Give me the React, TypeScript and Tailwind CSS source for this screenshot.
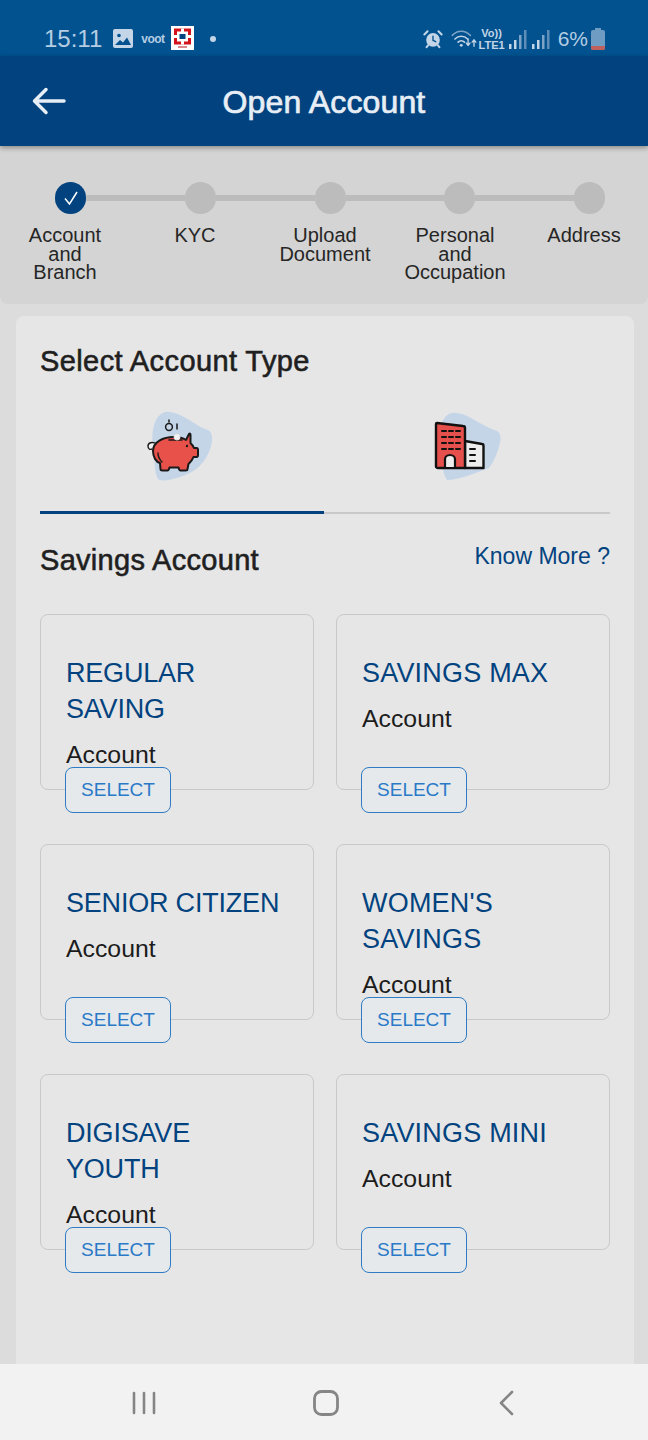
const font = "font-['Liberation_Sans',Arial,sans-serif]";

const steps = [
  { label: ["Account", "and", "Branch"], done: true },
  { label: ["KYC"] },
  { label: ["Upload", "Document"] },
  { label: ["Personal", "and", "Occupation"] },
  { label: ["Address"] },
];

const accounts = [
  { name: ["REGULAR", "SAVING"] },
  { name: ["SAVINGS MAX"], wide: true },
  { name: ["SENIOR CITIZEN"] },
  { name: ["WOMEN'S", "SAVINGS"], wide: true },
  { name: ["DIGISAVE", "YOUTH"] },
  { name: ["SAVINGS MINI"], wide: true },
];

const AlarmIcon = () => (
  <svg width="20" height="20" viewBox="0 0 22 22" fill="none">
    <circle cx="11" cy="12" r="7.5" fill="#c3d5e6" />
    <path d="M11 8v4.500l3 1.500" stroke="#01528f" strokeWidth="1.5" strokeLinecap="round" />
    <path d="M1.500 6 5 2.500M20.500 6 17 2.500M5.500 18 4 20M16.500 18l1.500 2" stroke="#c3d5e6" strokeWidth="2.2" strokeLinecap="round" />
  </svg>
);

const WifiIcon = () => (
  <svg width="26" height="20" viewBox="0 0 28 22" fill="none" strokeLinecap="round">
    <path d="M1 7c6-6 14-6 20 0" stroke="#7da3c6" strokeWidth="1.6" />
    <path d="M4 11c4-4 10-4 14 0" stroke="#c3d5e6" strokeWidth="1.8" />
    <path d="M7.500 14.500c2-2 5-2 7 0" stroke="#c3d5e6" strokeWidth="1.8" />
    <circle cx="11" cy="18" r="1.6" fill="#c3d5e6" />
    <path d="M18.500 11v7m-2-2.500 2 2.500 2-2.500" stroke="#c3d5e6" strokeWidth="1.5" />
    <path d="M25 19v-7m-2 2.500 2-2.500 2 2.500" stroke="#c3d5e6" strokeWidth="1.5" />
  </svg>
);

const SignalIcon = () => (
  <svg width="18" height="20" viewBox="0 0 18 20">
    <rect x="0" y="15" width="2.5" height="5" fill="#c3d5e6" />
    <rect x="5" y="11" width="2.5" height="9" fill="#c3d5e6" />
    <rect x="10" y="6" width="2.5" height="14" fill="#7da3c6" />
    <rect x="15" y="1" width="2.5" height="19" fill="#5f8db8" />
  </svg>
);

const BankLogo = () => (
  <svg width="23" height="24" viewBox="0 0 23 24">
    <rect width="23" height="24" fill="#ffffff" />
    <rect x="3" y="2.500" width="17" height="16" fill="#d3121c" />
    <path d="M10 2.500h3v16h-3ZM3 9h17v3H3Z" fill="#ffffff" />
    <rect x="6" y="5.500" width="11" height="10" fill="#ffffff" />
    <rect x="8.500" y="8" width="6" height="5" fill="#01437f" />
    <rect x="7" y="20" width="9" height="2" fill="#d98a8e" />
  </svg>
);

const PiggyIcon = () => (
  <svg className="-ml-[2px]" width="70" height="76" viewBox="0 0 70 76" fill="none">
    <path d="M19 5C34 3 50 20 62 23c6 3 5 14 0 24C56 60 46 66 34 70 24 73 12 76 11 70 8 62 9 52 7 38 5 26 8 8 19 5Z" fill="#c4d5e8" />
    <path d="M11 37c-5-3-9-1-9 2s2 4 4 3" stroke="#1a1a1a" strokeWidth="1.4" fill="#f0f0f0" />
    <path d="M7 44c0-9 10-14 21-14 5 0 9 1 12 3l3-6c1-1 1.500 0 1.500 1v8c2 2 3 3 3.500 5h2.500c1 0 1.500 1 1.500 2v5c0 1-.5 2-1.500 2h-3c-1 3-3 5-5 7l-1 5c0 1-1 1.500-2 1.500h-5c-1 0-1.500-1-2-3h-9c-.5 2-1 3-2 3h-5c-1 0-2-.5-2-1.500l-.5-6C10 55 7 50 7 44Z" fill="#e8504a" stroke="#1a1a1a" strokeWidth="2" strokeLinejoin="round" />
    <path d="M12 46c0 3 2 7 4 9" stroke="#1a1a1a" strokeWidth="1.4" strokeLinecap="round" />
    <path d="M23 33h13" stroke="#1a1a1a" strokeWidth="1.6" strokeLinecap="round" />
    <circle cx="31" cy="30" r="3" fill="#f2f2f2" stroke="#e4e4e4" />
    <circle cx="23" cy="20" r="3.4" stroke="#1a1a1a" strokeWidth="1.5" />
    <path d="M23 13v2M31 17v5" stroke="#1a1a1a" strokeWidth="1.5" strokeLinecap="round" />
    <circle cx="41" cy="39" r="1.2" fill="#1a1a1a" />
  </svg>
);

const BuildingIcon = () => (
  <svg width="70" height="76" viewBox="0 0 70 76" fill="none">
    <path d="M20 5c14-2 30 14 45 18 4 2 4 8 3 12-2 9-6 18-11 25-14 5-30 12-42 12-3-4-4-9-4-13L8 20C10 12 14 6 20 5Z" fill="#c4d5e8" />
    <path d="M33 33l17 3c1 0 1.500 1 1.500 2v22H33Z" fill="#ededed" stroke="#111" strokeWidth="2.4" strokeLinejoin="round" />
    <path d="M5 15l26 3c1 0 2 1 2 2v40H6c-1 0-2-.5-2-1.500V16c0-1 .5-1 1-1Z" fill="#e5504c" stroke="#111" strokeWidth="2.4" strokeLinejoin="round" />
    <path d="M10 23h4M17 23h4M24 23h4M10 29h4M17 29h4M24 29h4M10 35h4M17 35h4M24 35h4M10 41h4M17 41h4M24 41h4M38 41h5M38 47h5M38 53h5" stroke="#111" strokeWidth="2" strokeLinecap="round" />
    <path d="M13 60V51c0-2 2-4 5-4s5 2 5 4v9Z" fill="#ededed" stroke="#111" strokeWidth="2.2" />
  </svg>
);

function AccountCard({ name, wide }: { name: string[]; wide?: boolean }) {
  return (
    <div className="relative h-[176px] rounded-lg border border-[#c9c9c9] pl-[25px] pt-[40px]">
      {name.map((line) => (
        <p key={line} className={`text-[27px] leading-[36px] whitespace-nowrap text-[#02437f] ${wide ? "tracking-[0.2px]" : "tracking-[-0.2px]"}`}>
          {line}
        </p>
      ))}
      <p className="mt-[10px] text-[24.8px] leading-[36px] text-[#1c1c1c]">Account</p>
      <button className="absolute bottom-[-24px] left-[24px] flex h-[46px] w-[106px] items-center justify-center rounded-lg border border-[#2f7cc4] bg-[#e6e9ec] text-[19px] text-[#2a7ac8]">
        SELECT
      </button>
    </div>
  );
}

export default function App() {
  return (
    <div className={`${font} flex h-[1440px] w-[648px] flex-col overflow-hidden bg-[#dcdcdc]`}>
      <div className="flex h-[56px] items-center bg-[#01528f] pl-[44px] pr-[43px] pt-[21px] text-[#b4cde3]">
        <span className="text-[24px]">15:11</span>
        <svg className="ml-[11px]" width="20" height="19" viewBox="0 0 20 19">
          <rect width="20" height="19" rx="2" fill="#c3d5e6" />
          <circle cx="6" cy="6.500" r="1.8" fill="#01528f" />
          <path d="M2 16l5-5 3 2.500 4-5 4 7.500Z" fill="#01528f" />
        </svg>
        <span className="ml-[8px] text-[12px] leading-none font-bold tracking-[-0.5px]">voot</span>
        <div className="ml-[6px] -mt-[2px]"><BankLogo /></div>
        <span className="ml-[16px] h-[6px] w-[6px] rounded-full bg-[#c3d5e6]" />
        <div className="ml-auto flex items-center">
          <AlarmIcon />
          <div className="ml-[8px]"><WifiIcon /></div>
          <div className="ml-[2px] flex flex-col items-center text-[11px] leading-[12px] font-bold text-[#c3d5e6]">
            <span>Vo))</span>
            <span>LTE1</span>
          </div>
          <div className="ml-[4px]"><SignalIcon /></div>
          <div className="ml-[5px]"><SignalIcon /></div>
          <span className="ml-[8px] text-[21px] text-[#b4cde3]">6%</span>
          <div className="ml-[3px] flex flex-col items-center">
            <div className="h-[2px] w-[6px] bg-[#6f9cc3]" />
            <div className="relative h-[20px] w-[14px] rounded-[2px] bg-[#6f9cc3]">
              <div className="absolute bottom-0 h-[4px] w-full rounded-b-[2px] bg-[#c0605c]" />
            </div>
          </div>
        </div>
      </div>

      <header className="relative flex h-[90px] items-center justify-center bg-[#02437f] pt-[1px] shadow-[0_2px_5px_rgba(0,0,0,0.35)]">
        <svg className="absolute left-[32px] top-[31px]" width="34" height="28" viewBox="0 0 34 28" fill="none" stroke="#e8eef5" strokeWidth="3.5" strokeLinecap="round" strokeLinejoin="round">
          <path d="M32 14H3M14 2.500 2.500 14 14 25.500" />
        </svg>
        <h1 className="text-[32px] tracking-[0.15px] text-[#e8eef5] [-webkit-text-stroke:0.7px_#e8eef5]">Open Account</h1>
      </header>

      <section className="h-[158px] rounded-b-lg bg-[#d4d4d4] pt-[36px]">
        <div className="ml-[55px] flex h-[32px] w-[550px] items-center">
          {steps.map((step, i) => (
            <div key={i} className="contents">
              {i > 0 && <div className="h-[6px] flex-1 bg-[#bcbcbc]" />}
              <div className={`flex h-[32px] w-[31px] items-center justify-center rounded-full ${step.done ? "bg-[#02437f]" : "bg-[#bcbcbc]"}`}>
                {step.done && (
                  <svg width="14" height="14" viewBox="0 0 14 14" fill="none" stroke="#ffffff" strokeWidth="1.5">
                    <path d="M1 7.500 5.500 13 13 1" />
                  </svg>
                )}
              </div>
            </div>
          ))}
        </div>
        <div className="mt-[12px] grid grid-cols-[130px_130px_130px_130px_128px]">
          {steps.map((step, i) => (
            <div key={i} className="text-center text-[20px] leading-[18.5px] text-[#262626]">
              {step.label.map((line) => (
                <div key={line}>{line}</div>
              ))}
            </div>
          ))}
        </div>
      </section>

      <main className="ml-[16px] mr-[14px] mt-[12px] flex-1 rounded-t-lg bg-[#e6e6e6] px-[24px]">
        <h2 className="pt-[27px] text-[29px] leading-[36px] tracking-[0.4px] text-[#1f1f1f] [-webkit-text-stroke:0.6px_#1f1f1f]">Select Account Type</h2>

        <div className="mt-[28px] flex">
          <div className="flex w-[284px] justify-center border-b-[3px] border-[#02437f] pb-[28px]">
            <PiggyIcon />
          </div>
          <div className="flex flex-1 justify-center self-end border-b-[2px] border-[#c9c9c9] pb-[28px]">
            <BuildingIcon />
          </div>
        </div>

        <div className="mt-[27px] flex items-start justify-between">
          <h2 className="pt-[1px] text-[29px] leading-[36px] tracking-[0.3px] text-[#1f1f1f] [-webkit-text-stroke:0.6px_#1f1f1f]">Savings Account</h2>
          <a className="pt-[1px] text-[23px] leading-[28px] text-[#02437f]">Know More ?</a>
        </div>

        <div className="mt-[36px] grid grid-cols-2 gap-x-[22px] gap-y-[54px]">
          {accounts.map((a) => (
            <AccountCard key={a.name.join(" ")} name={a.name} wide={a.wide} />
          ))}
        </div>
      </main>

      <nav className="flex h-[76px] items-center bg-[#f2f2f2] pl-[131px] pt-[2px]">
        <svg width="26" height="26" viewBox="0 0 26 26" fill="none" stroke="#858585" strokeWidth="2.6" strokeLinecap="round">
          <path d="M3 3v20M13 3v20M23 3v20" />
        </svg>
        <svg className="ml-[155px]" width="28" height="28" viewBox="0 0 28 28" fill="none" stroke="#858585" strokeWidth="2.8">
          <rect x="2.500" y="2.500" width="23" height="23" rx="7" />
        </svg>
        <svg className="ml-[157px]" width="18" height="26" viewBox="0 0 18 26" fill="none" stroke="#858585" strokeWidth="2.6" strokeLinecap="round" strokeLinejoin="round">
          <path d="M15 2 4 13l11 11" />
        </svg>
      </nav>
    </div>
  );
}
